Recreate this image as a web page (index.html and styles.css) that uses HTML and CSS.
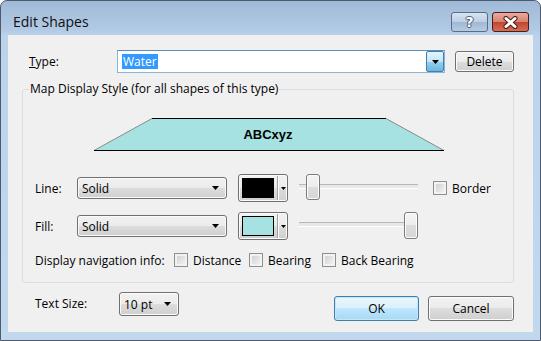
FILE: index.html
```html
<!DOCTYPE html>
<html lang="en">

<head>
    <meta charset="UTF-8">
    <meta name="viewport" content="width=device-width, initial-scale=1.0">
    <title>Edit Shapes</title>
    <link rel="stylesheet" href="styles.css">
</head>

<body>

    <div class="window">
        <div class="titlebar">
            <span class="title">Edit Shapes</span>
            <div class="caption">
                <span class="cap-btn help">?</span>
                <span class="cap-btn close">
                    <svg width="17" height="13" viewBox="0 0 17 13">
                        <path d="M4 2.5 L13 10.5 M13 2.5 L4 10.5" stroke="#4a1a14" stroke-width="5" stroke-linecap="round" />
                        <path d="M4 2.5 L13 10.5 M13 2.5 L4 10.5" stroke="#ffffff" stroke-width="3" stroke-linecap="round" />
                    </svg>
                </span>
            </div>
        </div>

        <div class="client">
            <div class="type-row">
                <label class="type-label"><u>T</u>ype:</label>
                <div class="combo-edit">
                    <span class="selected-text">Water</span>
                    <span class="combo-arrow">
                        <svg width="7" height="4" viewBox="0 0 7 4"><polygon points="0,0 7,0 3.5,4" fill="#000" /></svg>
                    </span>
                </div>
                <button class="btn delete-btn">Delete</button>
            </div>

            <fieldset class="group">
                <legend>Map Display Style (for all shapes of this type)</legend>
                <div class="group-body">
                    <!-- preview of the shape style -->
                    <svg class="preview" width="350" height="33" viewBox="0 0 350 33">
                        <polygon points="58,0.5 292,0.5 350,32.5 0,32.5" fill="#a6e2e2" />
                        <line x1="0" y1="32.5" x2="58" y2="0.5" stroke="#8a8a8a" />
                        <line x1="292" y1="0.5" x2="350" y2="32.5" stroke="#8a8a8a" />
                        <line x1="58" y1="0.5" x2="292" y2="0.5" stroke="#000" />
                        <line x1="0" y1="32.5" x2="350" y2="32.5" stroke="#000" />
                        <text x="174" y="21" text-anchor="middle" class="preview-text">ABCxyz</text>
                    </svg>

                    <div class="style-row">
                        <span class="row-label">Line:</span>
                        <div class="dropdown style-select">
                            <span>Solid</span>
                            <svg width="7" height="4" viewBox="0 0 7 4"><polygon points="0,0 7,0 3.5,4" fill="#000" /></svg>
                        </div>
                        <div class="color-btn">
                            <span class="swatch swatch-black"></span>
                            <span class="color-sep"></span>
                            <svg width="5" height="3" viewBox="0 0 5 3"><polygon points="0,0 5,0 2.5,3" fill="#000" /></svg>
                        </div>
                        <div class="slider"><span class="thumb thumb-low"></span></div>
                        <label class="check-item border-check"><span class="check"></span>Border</label>
                    </div>

                    <div class="style-row">
                        <span class="row-label">Fill:</span>
                        <div class="dropdown style-select">
                            <span>Solid</span>
                            <svg width="7" height="4" viewBox="0 0 7 4"><polygon points="0,0 7,0 3.5,4" fill="#000" /></svg>
                        </div>
                        <div class="color-btn">
                            <span class="swatch swatch-water"></span>
                            <span class="color-sep"></span>
                            <svg width="5" height="3" viewBox="0 0 5 3"><polygon points="0,0 5,0 2.5,3" fill="#000" /></svg>
                        </div>
                        <div class="slider"><span class="thumb thumb-high"></span></div>
                    </div>

                    <div class="nav-row">
                        <span class="nav-label">Display navigation info:</span>
                        <label class="check-item nav-distance"><span class="check"></span>Distance</label>
                        <label class="check-item nav-bearing"><span class="check"></span>Bearing</label>
                        <label class="check-item"><span class="check"></span>Back Bearing</label>
                    </div>
                </div>
            </fieldset>

            <div class="bottom-row">
                <span class="size-label">Text Size:</span>
                <div class="dropdown size-select">
                    <span>10 pt</span>
                    <svg width="7" height="4" viewBox="0 0 7 4"><polygon points="0,0 7,0 3.5,4" fill="#000" /></svg>
                </div>
                <button class="btn ok-btn">OK</button>
                <button class="btn cancel-btn">Cancel</button>
            </div>
        </div>
    </div>

</body>

</html>
```

FILE: styles.css
```css
body {
    margin: 0;
    font-family: 'Open Sans', sans-serif;
    font-size: 12px;
    color: #000;
    background: #ffffff;
}

.window {
    width: 541px;
    height: 341px;
    box-sizing: border-box;
    border: 1px solid #4e5b6c;
    border-radius: 7px 7px 0 0;
    background: linear-gradient(#9fbad8 0, #b1c9e4 28px, #bcd3ec 36px, #c2d8ef);
    display: flex;
    flex-direction: column;
}

/* title bar */

.titlebar {
    height: 34px;
    box-sizing: border-box;
    padding: 11px 11px 0 12px;
    display: flex;
    justify-content: space-between;
    align-items: flex-start;
}

.title {
    font-size: 14px;
    line-height: 20px;
    color: #101010;
}

.caption {
    display: flex;
    gap: 4px;
}

.cap-btn {
    width: 37px;
    height: 20px;
    box-sizing: border-box;
    border: 1px solid #5b6d84;
    border-radius: 3px;
    display: flex;
    align-items: center;
    justify-content: center;
}

.help {
    background: linear-gradient(#d6e3f1, #bccfe4 50%, #a0b8d5 50%, #b6cbe2);
    color: #ffffff;
    font-family: 'DejaVu Sans', sans-serif;
    font-weight: 700;
    font-size: 14px;
    text-shadow: 1px 0 0 #4b5a6e, -1px 0 0 #4b5a6e, 0 1px 0 #4b5a6e, 0 -1px 0 #4b5a6e;
}

.close {
    border-color: #4c1d18;
    background: linear-gradient(#e8ab9f, #d5826f 50%, #c2432f 50%, #d36f58);
}

/* client area */

.client {
    flex: 1;
    margin: 0 7px 8px;
    background: #f0f0f0;
    display: flex;
    flex-direction: column;
}

.type-row {
    display: flex;
    align-items: center;
    padding: 15px 0 0 21px;
}

.type-label {
    width: 88px;
}

.combo-edit {
    width: 328px;
    height: 23px;
    box-sizing: border-box;
    border: 1px solid #8eb3d8;
    border-top-color: #5b8fc2;
    background: #ffffff;
    display: flex;
    align-items: center;
}

.selected-text {
    margin-left: 4px;
    padding: 0 1px;
    line-height: 15px;
    background: #3399ff;
    color: #ffffff;
}

.combo-arrow {
    margin-left: auto;
    width: 18px;
    height: 100%;
    box-sizing: border-box;
    border: 1px solid #3c7fb1;
    border-radius: 2px;
    background: linear-gradient(#e5f4fc, #c4e5f6 50%, #98d1ef 50%, #6cb6dd);
    display: flex;
    align-items: center;
    justify-content: center;
}

.btn {
    font-family: 'Open Sans', sans-serif;
    font-size: 12px;
    color: #000;
    border: 1px solid #707070;
    border-radius: 3px;
    background: linear-gradient(#f2f2f2, #ebebeb 50%, #dddddd 50%, #cfcfcf);
    box-shadow: inset 0 0 0 1px #fbfbfb;
    padding: 0;
}

.delete-btn {
    margin-left: 10px;
    width: 59px;
    height: 21px;
}

/* group box */

.group {
    margin: 8px 0 0 14px;
    width: 492px;
    box-sizing: border-box;
    padding: 0;
    min-width: 0;
    border: 1px solid #d5dfe5;
    border-radius: 3px;
}

.group legend {
    margin-left: 6px;
    padding: 0 1px;
    line-height: 16px;
}

.group-body {
    padding: 0 0 14px 12px;
}

.preview {
    display: block;
    margin: 21px 0 0 59px;
}

.preview-text {
    font-family: 'Liberation Sans', sans-serif;
    font-weight: 700;
    font-size: 13px;
    fill: #000;
}

.style-row {
    display: flex;
    align-items: center;
    height: 28px;
    margin-top: 10px;
}

.preview + .style-row {
    margin-top: 23px;
}

.row-label {
    width: 42px;
}

.dropdown {
    box-sizing: border-box;
    border: 1px solid #707070;
    border-radius: 3px;
    background: linear-gradient(#f2f2f2, #ebebeb 50%, #dddddd 50%, #cfcfcf);
    box-shadow: inset 0 0 0 1px #fbfbfb;
    display: flex;
    align-items: center;
    justify-content: space-between;
    padding: 0 7px 0 4px;
}

.style-select {
    width: 150px;
    height: 22px;
}

.color-btn {
    margin-left: 11px;
    width: 50px;
    height: 28px;
    box-sizing: border-box;
    border: 1px solid #707070;
    border-radius: 3px;
    background: linear-gradient(#f2f2f2, #ebebeb 50%, #dddddd 50%, #cfcfcf);
    box-shadow: inset 0 0 0 1px #fbfbfb;
    display: flex;
    align-items: center;
    padding-left: 3px;
}

.swatch {
    width: 32px;
    height: 20px;
    box-sizing: border-box;
    border: 1px solid #000;
}

.swatch-black {
    background: #000;
}

.swatch-water {
    background: #a6e2e2;
}

.color-sep {
    width: 1px;
    height: 24px;
    margin: 0 3px 0 3px;
    background: #a0a0a0;
    box-shadow: 1px 0 0 #fff;
}

.slider {
    margin-left: 11px;
    width: 119px;
    height: 28px;
    align-self: flex-start;
    display: flex;
    align-items: flex-start;
    background: linear-gradient(#b8b8b8 0 1px, #e7e7e7 1px 4px, #ffffff 4px 5px) no-repeat 0 10px / 100% 5px;
}

.thumb {
    width: 14px;
    height: 26px;
    box-sizing: border-box;
    border: 1px solid #7a7a7a;
    border-radius: 3px;
    background: linear-gradient(#f4f4f4, #ececec 50%, #dcdcdc 50%, #d6d6d6);
    box-shadow: inset 0 0 0 1px #fdfdfd;
}

.thumb-low {
    margin-left: 7px;
}

.thumb-high {
    margin-left: 105px;
    height: 27px;
}

.check-item {
    display: flex;
    align-items: center;
    gap: 5px;
}

.check {
    width: 14px;
    height: 14px;
    box-sizing: border-box;
    border: 1px solid #8e8f8f;
    background: linear-gradient(135deg, #cdcdcd, #f6f6f6);
    box-shadow: inset 0 0 0 2px #f2f2f2;
}

.border-check {
    margin-left: 15px;
}

.nav-row {
    display: flex;
    align-items: center;
    margin-top: 12px;
    height: 16px;
}

.nav-label {
    width: 139px;
}

.nav-distance {
    width: 75px;
}

.nav-bearing {
    width: 73px;
}

/* bottom buttons */

.bottom-row {
    display: flex;
    align-items: flex-start;
    margin-top: 9px;
    padding: 0 19px 0 27px;
}

.size-label {
    width: 84px;
    line-height: 24px;
}

.size-select {
    width: 60px;
    height: 24px;
}

.ok-btn {
    margin: 4px 0 0 auto;
    width: 85px;
    height: 25px;
    border-color: #3c7fb1;
    background: linear-gradient(#eaf6fd, #d9f0fc 50%, #bee6fd 50%, #a7d9f5);
    box-shadow: inset 0 0 0 1px #c6e6f8;
}

.cancel-btn {
    margin: 4px 0 0 9px;
    width: 86px;
    height: 25px;
}
```
